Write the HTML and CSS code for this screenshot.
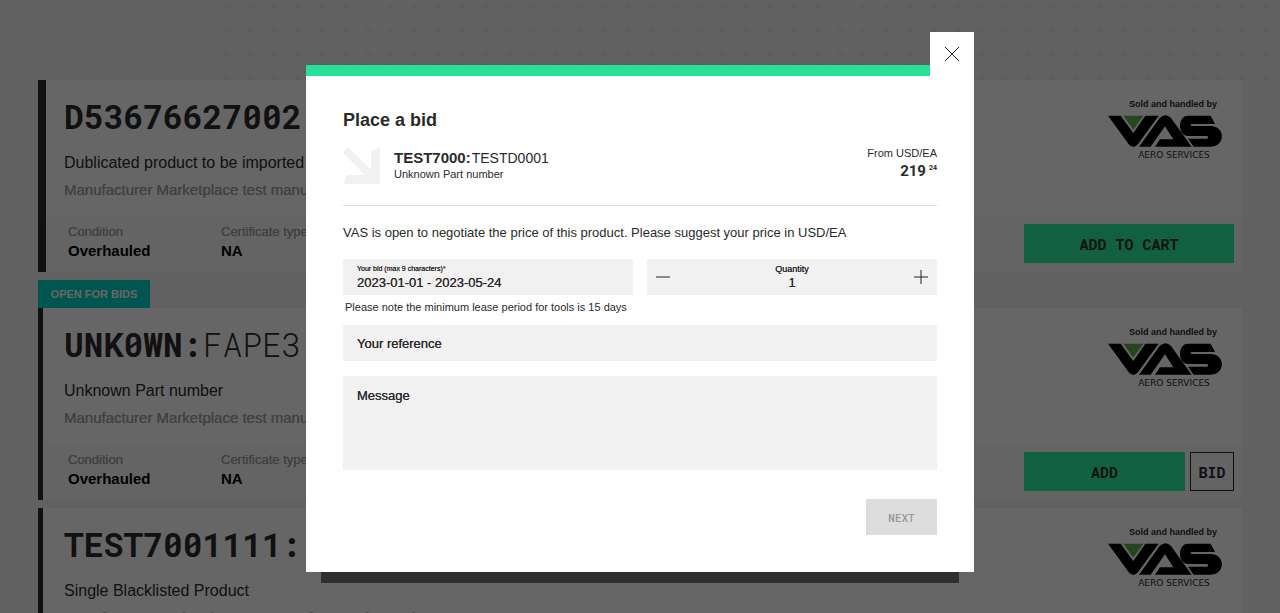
FILE: index.html
```html
<!DOCTYPE html>
<html lang="en">
<head>
  <meta charset="UTF-8" />
  <meta name="viewport" content="width=device-width, initial-scale=1.0"/>
  <title>Place a bid</title>
  <link rel="stylesheet" href="styles.css">
</head>
<body>
  <!-- shared logo -->
  <svg class="sprite" aria-hidden="true">
    <symbol id="vas" viewBox="0 0 342 96">
      <path fill="#5db04c" d="M46 2h60L76 44z"/>
      <path d="M0 2h38l38 52L112 2h40L88 90q-12 10-24 0z"/>
      <path d="M93 95l62-86q18-16 34 0l62 86H141l15-22h40L171 34 128 95z"/>
      <path d="M308 2h-68c-32 0-32 61 0 61h58q4 4 0 8h-58l17 24h51c45 0 45-62 0-62h-58q-4-3 0-6h71z"/>
    </symbol>
  </svg>

  <header class="hero">
    <svg class="crosses" aria-hidden="true">
      <defs>
        <pattern id="cross" width="23.6" height="23.6" patternUnits="userSpaceOnUse">
          <path d="M5 7.5h7M8.5 4v7" stroke="#e4e4e4" stroke-width="1"/>
          <path d="M16 7.5h1M20 7.5h1M8.5 16v1M8.5 20v1" stroke="#ececec" stroke-width="1"/>
        </pattern>
      </defs>
      <rect width="100%" height="100%" fill="url(#cross)"/>
    </svg>
  </header>

  <main class="list">
    <article class="card card-first">
      <div class="card-body">
        <div class="card-info">
          <h2>D53676627002</h2>
          <p class="desc">Dublicated product to be imported</p>
          <p class="maker">Manufacturer Marketplace test manufacturer (D0001)</p>
        </div>
        <div class="seller">
          <p>Sold and handled by</p>
          <svg class="logo" role="img" aria-label="VAS"><use href="#vas"/></svg>
          <span>AERO SERVICES</span>
        </div>
      </div>
      <div class="card-foot">
        <dl>
          <div><dt>Condition</dt><dd>Overhauled</dd></div>
          <div><dt>Certificate type</dt><dd>NA</dd></div>
        </dl>
        <div class="actions">
          <button class="btn" type="button">ADD TO CART</button>
        </div>
      </div>
    </article>

    <div>
      <span class="badge">OPEN FOR BIDS</span>
      <article class="card">
        <div class="card-body">
          <div class="card-info">
            <h2>UNK0WN:<span>FAPE3</span></h2>
            <p class="desc">Unknown Part number</p>
            <p class="maker">Manufacturer Marketplace test manufacturer (D0001)</p>
          </div>
          <div class="seller">
            <p>Sold and handled by</p>
            <svg class="logo" role="img" aria-label="VAS"><use href="#vas"/></svg>
            <span>AERO SERVICES</span>
          </div>
        </div>
        <div class="card-foot">
          <dl>
            <div><dt>Condition</dt><dd>Overhauled</dd></div>
            <div><dt>Certificate type</dt><dd>NA</dd></div>
          </dl>
          <div class="actions">
            <button class="btn" type="button">ADD</button>
            <button class="btn btn-outline" type="button">BID</button>
          </div>
        </div>
      </article>
    </div>

    <article class="card">
      <div class="card-body">
        <div class="card-info">
          <h2>TEST7001111:</h2>
          <p class="desc">Single Blacklisted Product</p>
          <p class="maker">Manufacturer Marketplace test manufacturer (D0001)</p>
        </div>
        <div class="seller">
          <p>Sold and handled by</p>
          <svg class="logo" role="img" aria-label="VAS"><use href="#vas"/></svg>
          <span>AERO SERVICES</span>
        </div>
      </div>
    </article>
  </main>

  <div class="overlay">
    <section class="modal" role="dialog" aria-labelledby="modalTitle">
      <button class="close" type="button" aria-label="Close">
        <svg width="16" height="16" viewBox="0 0 16 16"><path d="M1 1l14 14M15 1L1 15"/></svg>
      </button>

      <h1 id="modalTitle">Place a bid</h1>

      <div class="product">
        <svg class="arrow" width="37" height="37" viewBox="0 0 37 37"><path d="M5 0L28 23V5L37 0V37H0L4 28H22L0 6Z"/></svg>
        <div class="product-name">
          <p class="part"><b>TEST7000:</b>TESTD0001</p>
          <p class="small">Unknown Part number</p>
        </div>
        <div class="price">
          <p class="small">From USD/EA</p>
          <p class="amount">219<sup>24</sup></p>
        </div>
      </div>

      <form>
        <p class="intro">VAS is open to negotiate the price of this product. Please suggest your price in USD/EA</p>

        <div class="row">
          <div class="field">
            <label for="bid">Your bid (max 9 characters)<em>*</em></label>
            <input type="text" id="bid" value="2023-01-01 - 2023-05-24" />
          </div>
          <div class="field quantity">
            <button type="button" aria-label="Decrease">
              <svg width="14" height="14" viewBox="0 0 14 14"><path d="M0 7h14"/></svg>
            </button>
            <div class="count">
              <label for="qty">Quantity</label>
              <input type="text" id="qty" value="1" />
            </div>
            <button type="button" aria-label="Increase">
              <svg width="14" height="14" viewBox="0 0 14 14"><path d="M0 7h14M7 0v14"/></svg>
            </button>
          </div>
        </div>
        <p class="small hint">Please note the minimum lease period for tools is 15 days</p>

        <input class="reference" type="text" placeholder="Your reference" aria-label="Your reference" />
        <textarea class="message" placeholder="Message" aria-label="Message"></textarea>

        <button class="next" type="button" disabled>NEXT</button>
      </form>
    </section>
  </div>
</body>
</html>
```

FILE: styles.css
```css
:root {
  --page-bg: #f2f2f2;
  --field-bg: #f1f1f1;
  --text: #2b2b2b;
  --green: #28df99;
  --mono: "Roboto Mono", "DejaVu Sans Mono", monospace;
}

* {
  box-sizing: border-box;
}

body {
  margin: 0;
  height: 100vh;
  overflow: hidden;
  background: var(--page-bg);
  color: var(--text);
  font-family: "Liberation Sans", Arial, sans-serif;
}

h1, h2, p, dl, dd {
  margin: 0;
}

button, input, textarea {
  font-family: inherit;
  color: inherit;
  border: none;
  border-radius: 0;
  padding: 0;
}

.sprite {
  position: absolute;
  width: 0;
  height: 0;
}

/* page behind the dialog */
.hero {
  height: 80px;
  padding-left: 218px;
}

.crosses {
  display: block;
  width: 100%;
  height: 84px;
}

.list {
  position: relative;
  display: flex;
  flex-direction: column;
  gap: 8px;
  padding: 0 38px;
}

.card {
  --bar: 5px;
  background: white;
  border-left: var(--bar) solid var(--text);
}

.card-first {
  --bar: 8px;
}

.card-body {
  display: flex;
  justify-content: space-between;
  height: 137px;
  padding: 16px 20px 0 calc(26px - var(--bar));
}

.card h2 {
  font-family: var(--mono);
  font-size: 33px;
  line-height: 40px;
  font-weight: 700;
  white-space: nowrap;
}

.card h2 span {
  font-weight: 300;
}

.desc {
  margin-top: 17px;
  font-size: 16px;
  line-height: 20px;
}

.maker {
  margin-top: 7px;
  font-size: 15px;
  line-height: 20px;
  color: #a3a3a3;
  text-shadow: 0 0 0 #a3a3a3;
}

.seller {
  display: flex;
  flex-direction: column;
  width: 114px;
  text-align: center;
}

.seller p {
  padding: 1px 5px 0 0;
  text-align: right;
  font-size: 9px;
  line-height: 14px;
  font-weight: 700;
  white-space: nowrap;
}

.seller span {
  padding: 2px 0 0 18px;
  font-family: "DejaVu Sans", sans-serif;
  font-size: 9px;
  line-height: 12px;
  white-space: nowrap;
}

.logo {
  width: 114px;
  height: 32px;
  margin-top: 4px;
}

.card-foot {
  display: flex;
  justify-content: space-between;
  height: 55px;
  padding: 7px 8px 8px calc(30px - var(--bar));
  background: #fbfbfb;
}

.card-foot dl {
  display: flex;
}

.card-foot dl div {
  width: 153px;
}

dt {
  font-size: 13px;
  line-height: 16px;
  color: #a3a3a3;
  text-shadow: 0 0 0 #a3a3a3;
}

dd {
  margin-top: 2px;
  font-size: 15px;
  line-height: 18px;
  font-weight: 700;
  color: black;
}

.actions {
  display: flex;
  gap: 5px;
  width: 210px;
}

.btn {
  flex: 1;
  height: 39px;
  background: #2df0a6;
  font-family: var(--mono);
  font-size: 15px;
  font-weight: 700;
}

.btn-outline {
  flex: 0 0 44px;
  background: transparent;
  border: 1px solid var(--text);
}

.badge {
  display: block;
  width: 112px;
  background: #00d4c8;
  color: white;
  font-size: 11px;
  line-height: 28px;
  font-weight: 700;
  text-align: center;
}

/* dialog */
.overlay {
  position: fixed;
  inset: 0;
  display: flex;
  justify-content: center;
  align-items: flex-start;
  padding-top: 65px;
  background: rgba(0, 0, 0, 0.6);
}

.modal {
  position: relative;
  width: 668px;
  padding: 32px 37px 37px;
  background: white;
  border-top: 11px solid var(--green);
}

.modal::after {
  content: "";
  position: absolute;
  left: 15px;
  right: 15px;
  top: 100%;
  height: 11px;
  background: #2e2e2e;
}

.close {
  position: absolute;
  top: -44px;
  right: 0;
  width: 44px;
  height: 44px;
  background: white;
}

.close svg {
  display: block;
  margin: auto;
}

.close path, .quantity path {
  stroke: #222;
  fill: none;
}

h1 {
  font-size: 18px;
  line-height: 24px;
}

.product {
  display: flex;
  padding: 14px 0 21px;
  border-bottom: 1px solid #ddd;
}

.arrow {
  margin-top: 1px;
  fill: #f1f1f1;
}

.product-name {
  flex: 1;
  padding: 3px 0 0 14px;
}

.part {
  font-size: 14px;
  line-height: 18px;
}

.part b {
  margin-right: 1px;
  font-size: 15px;
}

.small {
  font-size: 11px;
  line-height: 14px;
}

.price {
  text-align: right;
}

.amount {
  margin-top: 2px;
  font-family: Roboto, sans-serif;
  font-size: 15px;
  line-height: 18px;
  font-weight: 700;
}

.amount sup {
  margin-left: 3px;
  font-size: 7px;
  line-height: 7px;
}

.intro {
  padding: 18px 0 17px;
  font-size: 13px;
  line-height: 18px;
}

.row {
  display: grid;
  grid-template-columns: 1fr 1fr;
  gap: 14px;
}

.field {
  height: 36px;
  padding: 6px 14px;
  background: var(--field-bg);
}

.field label {
  display: block;
  font-size: 7px;
  line-height: 8px;
  text-shadow: 0 0 0 var(--text);
}

.field em {
  color: #e4002b;
}

.field input {
  display: block;
  width: 100%;
  height: 18px;
  background: transparent;
  font-size: 13px;
  text-shadow: 0 0 0 var(--text);
}

.quantity {
  display: flex;
  justify-content: space-between;
  padding: 0 9px;
}

.quantity button {
  width: 14px;
  background: transparent;
}

.quantity svg {
  display: block;
}

.count {
  padding-top: 5px;
}

.field .count label {
  font-size: 9px;
  line-height: 10px;
  text-align: center;
}

.field .count input {
  width: 60px;
  font-size: 12px;
  text-align: center;
}

.hint {
  padding: 5px 2px 11px;
}

.reference, .message {
  display: block;
  width: 100%;
  background: var(--field-bg);
  font-size: 13px;
}

.reference {
  height: 36px;
  padding: 0 14px;
}

.message {
  height: 94px;
  margin-top: 15px;
  padding: 12px 14px;
  resize: none;
}

.reference::placeholder, .message::placeholder {
  color: var(--text);
  text-shadow: 0 0 0 var(--text);
}

.next {
  display: block;
  width: 71px;
  height: 36px;
  margin: 29px 0 0 auto;
  background: #ddd;
  color: #999;
  font-family: var(--mono);
  font-size: 11px;
  font-weight: 500;
}
```
